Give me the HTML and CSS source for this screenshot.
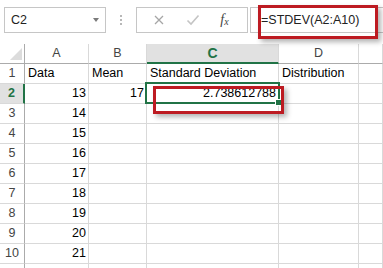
FILE: index.html
```html
<!doctype html>
<html lang="en">
<head>
  <meta charset="utf-8">
  <title>STDEV</title>
  <link rel="stylesheet" href="styles.css">
</head>
<body>

<div class="topbar">
  <div class="namebox">
    <span>C2</span>
    <span class="arrow"></span>
  </div>
  <div class="dots"><i></i><i></i><i></i></div>
  <div class="btnbox">
    <svg class="ico" width="12" height="12" viewBox="0 0 12 12"><path d="M2 2 L10 10 M10 2 L2 10" stroke="#a6a6a6" stroke-width="1.3" fill="none"/></svg>
    <svg class="ico" width="14" height="12" viewBox="0 0 14 12"><path d="M1.5 6.5 L5 10 L12.5 1.5" stroke="#c4c4c4" stroke-width="1.6" fill="none"/></svg>
    <span class="fx">f<sub>x</sub></span>
  </div>
  <div class="formula">
    <span>=STDEV(A2:A10)</span>
    <div class="callout"></div>
  </div>
</div>

<div class="sheet">
  <div class="corner"><span class="tri"></span></div>
  <div class="colhead">A</div>
  <div class="colhead">B</div>
  <div class="colhead active">C</div>
  <div class="colhead">D</div>
  <div class="colhead"></div>

  <div class="rowhead">1</div>
  <div class="cell">Data</div>
  <div class="cell">Mean</div>
  <div class="cell">Standard Deviation</div>
  <div class="cell">Distribution</div>
  <div class="cell"></div>

  <div class="rowhead active">2</div>
  <div class="cell num">13</div>
  <div class="cell num">17</div>
  <div class="cell num sel">2.738612788
    <div class="selbox"><span class="handle"></span></div>
    <div class="callout cellcall"></div>
  </div>
  <div class="cell"></div>
  <div class="cell"></div>

  <div class="rowhead">3</div><div class="cell num">14</div><div class="cell"></div><div class="cell"></div><div class="cell"></div><div class="cell"></div>
  <div class="rowhead">4</div><div class="cell num">15</div><div class="cell"></div><div class="cell"></div><div class="cell"></div><div class="cell"></div>
  <div class="rowhead">5</div><div class="cell num">16</div><div class="cell"></div><div class="cell"></div><div class="cell"></div><div class="cell"></div>
  <div class="rowhead">6</div><div class="cell num">17</div><div class="cell"></div><div class="cell"></div><div class="cell"></div><div class="cell"></div>
  <div class="rowhead">7</div><div class="cell num">18</div><div class="cell"></div><div class="cell"></div><div class="cell"></div><div class="cell"></div>
  <div class="rowhead">8</div><div class="cell num">19</div><div class="cell"></div><div class="cell"></div><div class="cell"></div><div class="cell"></div>
  <div class="rowhead">9</div><div class="cell num">20</div><div class="cell"></div><div class="cell"></div><div class="cell"></div><div class="cell"></div>
  <div class="rowhead">10</div><div class="cell num">21</div><div class="cell"></div><div class="cell"></div><div class="cell"></div><div class="cell"></div>
  <div class="rowhead"></div><div class="cell"></div><div class="cell"></div><div class="cell"></div><div class="cell"></div><div class="cell"></div>
</div>

</body>
</html>
```

FILE: styles.css
```css
body {
  margin: 0;
  background: #fff;
  font-family: "Liberation Sans", Arial, sans-serif;
  font-size: 12.5px;
  color: #000;
  height: 100vh;
  overflow: hidden;
}

/* formula bar */
.topbar {
  display: flex;
  height: 44px;
  padding: 7px 0 0 4px;
  box-sizing: border-box;
}

.namebox {
  width: 102px;
  height: 26px;
  box-sizing: border-box;
  border: 1px solid #c6c6c6;
  display: flex;
  align-items: center;
  justify-content: space-between;
  padding: 0 6px 0 6px;
  color: #222;
}

.arrow {
  width: 0;
  height: 0;
  border-left: 3.5px solid transparent;
  border-right: 3.5px solid transparent;
  border-top: 4px solid #7a7a7a;
}

.dots {
  width: 30px;
  display: flex;
  flex-direction: column;
  align-items: center;
  justify-content: center;
  gap: 2px;
  height: 26px;
}

.dots i {
  width: 2px;
  height: 2px;
  background: #b8b8b8;
}

.btnbox {
  width: 112px;
  height: 26px;
  box-sizing: border-box;
  border: 1px solid #c6c6c6;
  display: flex;
  align-items: center;
  justify-content: space-around;
  padding: 0 8px 0 6px;
}

.fx {
  font-family: "Liberation Serif", serif;
  font-style: italic;
  font-size: 14px;
  color: #444;
}

.fx sub {
  font-size: 10px;
  vertical-align: -1px;
}

.formula {
  position: relative;
  flex: 1;
  margin-left: 2px;
  height: 26px;
  box-sizing: border-box;
  border: 1px solid #c6c6c6;
  border-right: none;
  display: flex;
  align-items: center;
  padding-left: 10px;
  color: #222;
}

.callout {
  position: absolute;
  border: 3px solid #bd1b22;
  box-sizing: border-box;
  box-shadow: 3px 3px 5px rgba(0, 0, 0, 0.3);
  pointer-events: none;
}

.formula .callout {
  left: 7px;
  top: -3px;
  width: 120px;
  height: 34px;
}

/* grid */
.sheet {
  display: grid;
  grid-template-columns: 25px 64px 58px 132px 80px 1fr;
  grid-auto-rows: 20px;
  height: calc(100vh - 44px);
  overflow: hidden;
}

.sheet > div {
  box-sizing: border-box;
  border-right: 1px solid #d9d9d9;
  border-bottom: 1px solid #d9d9d9;
}

.corner {
  position: relative;
  border-bottom-color: #ababab !important;
  border-right-color: #ababab !important;
}

.tri {
  position: absolute;
  right: 2px;
  bottom: 3px;
  width: 0;
  height: 0;
  border-left: 12px solid transparent;
  border-bottom: 12px solid #dcdcdc;
}

.colhead {
  text-align: center;
  line-height: 19px;
  color: #444;
  border-bottom-color: #ababab !important;
}

.colhead.active {
  background: #e1e1e1;
  color: #217346;
  font-weight: bold;
  font-size: 14px;
  border-bottom: 2px solid #217346 !important;
  line-height: 18px;
}

.rowhead {
  text-align: center;
  line-height: 19px;
  color: #444;
  border-right-color: #ababab !important;
}

.rowhead.active {
  background: #e1e1e1;
  color: #217346;
  font-weight: bold;
  border-right: 2px solid #217346 !important;
}

.cell {
  line-height: 19px;
  padding: 0 3px;
  white-space: nowrap;
}

.cell.num {
  text-align: right;
  padding-right: 2px;
}

.sel {
  position: relative;
}

.selbox {
  position: absolute;
  left: -2px;
  top: -2px;
  right: -2px;
  bottom: -1px;
  border: 2px solid #217346;
}

.handle {
  position: absolute;
  right: -4px;
  bottom: -4px;
  width: 5px;
  height: 5px;
  background: #217346;
  border: 1px solid #fff;
}

.cellcall {
  left: 6px;
  top: 2px;
  width: 131px;
  height: 28px;
}
```
